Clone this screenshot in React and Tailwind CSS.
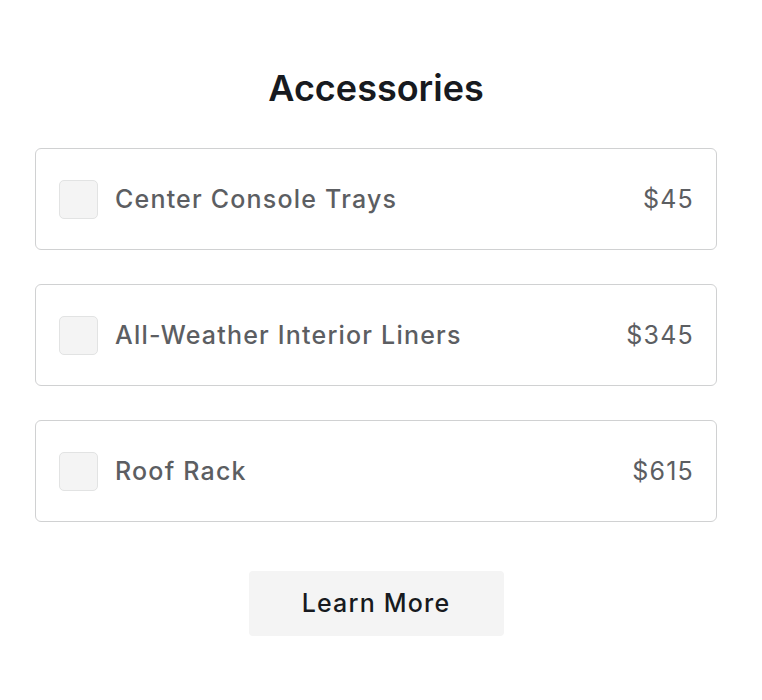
const items = [
  { name: 'Center Console Trays', price: '$45' },
  { name: 'All-Weather Interior Liners', price: '$345' },
  { name: 'Roof Rack', price: '$615' },
];

export default function App() {
  return (
    <div className="min-h-[700px] w-[762px] bg-white font-['Inter',sans-serif]">
      <div className="ml-[35px] flex w-[682px] flex-col items-center pt-[66px]">
        <h1 className="text-[36px] font-semibold leading-[44px] text-[#171a20]">
          Accessories
        </h1>

        <div className="mt-[38px] flex w-full flex-col gap-[34px]">
          {items.map((item) => (
            <label
              key={item.name}
              className="flex h-[102px] items-center rounded-[6px] border border-[#d0d1d2] pl-[23px] pr-[22px]"
            >
              <span className="h-[39px] w-[39px] shrink-0 rounded-[5px] border border-[#e2e3e3] bg-[#f4f4f4]" />
              <span className="ml-[17px] flex-1 pt-[2px] text-[25px] font-medium tracking-[1.2px] text-[#5c5e62]">
                {item.name}
              </span>
              <span className="pt-[2px] text-[25px] tracking-[1.2px] text-[#5c5e62]">{item.price}</span>
            </label>
          ))}
        </div>

        <button className="mt-[49px] h-[65px] w-[255px] rounded-[4px] bg-[#f4f4f4] text-[25px] font-medium tracking-[1.2px] text-[#171a20]">
          Learn More
        </button>
      </div>
    </div>
  );
}
